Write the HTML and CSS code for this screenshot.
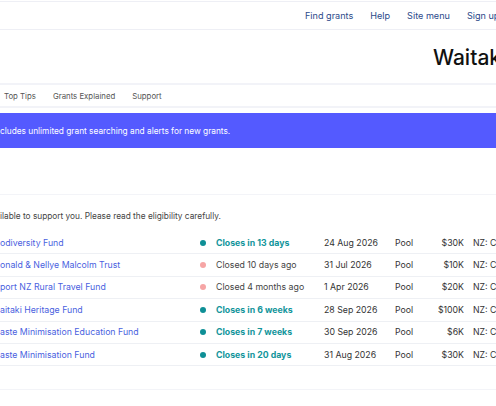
FILE: index.html
```html
<!DOCTYPE html>
<html>
<head>
<meta charset="utf-8">
<link rel="stylesheet" href="styles.css">
</head>
<body>
<div class="page">
  <header class="topbar">
    <nav class="topnav">
      <a>Find grants</a>
      <a>Help</a>
      <a>Site menu</a>
      <a>Sign up</a>
    </nav>
  </header>
  <div class="titlebar">
    <h1 class="title">Waitaki</h1>
  </div>
  <nav class="subnav">
    <a>Top Tips</a>
    <a>Grants Explained</a>
    <a>Support</a>
  </nav>
  <div class="banner">cludes unlimited grant searching and alerts for new grants.</div>
  <div class="section">
    <p class="intro">ilable to support you. Please read the eligibility carefully.</p>
    <div class="table">
      <div class="row">
        <a class="name">odiversity Fund</a>
        <span class="status open"><i class="dot"></i>Closes in 13 days</span>
        <span class="date">24 Aug 2026</span>
        <span class="type">Pool</span>
        <span class="amount">$30K</span>
        <span class="region">NZ: Canterbury</span>
      </div>
      <div class="row">
        <a class="name">onald &amp; Nellye Malcolm Trust</a>
        <span class="status closed"><i class="dot"></i>Closed 10 days ago</span>
        <span class="date">31 Jul 2026</span>
        <span class="type">Pool</span>
        <span class="amount">$10K</span>
        <span class="region">NZ: Canterbury</span>
      </div>
      <div class="row">
        <a class="name">port NZ Rural Travel Fund</a>
        <span class="status closed"><i class="dot"></i>Closed 4 months ago</span>
        <span class="date">1 Apr 2026</span>
        <span class="type">Pool</span>
        <span class="amount">$20K</span>
        <span class="region">NZ: Canterbury</span>
      </div>
      <div class="row">
        <a class="name">aitaki Heritage Fund</a>
        <span class="status open"><i class="dot"></i>Closes in 6 weeks</span>
        <span class="date">28 Sep 2026</span>
        <span class="type">Pool</span>
        <span class="amount">$100K</span>
        <span class="region">NZ: Canterbury</span>
      </div>
      <div class="row">
        <a class="name">aste Minimisation Education Fund</a>
        <span class="status open"><i class="dot"></i>Closes in 7 weeks</span>
        <span class="date">30 Sep 2026</span>
        <span class="type">Pool</span>
        <span class="amount">$6K</span>
        <span class="region">NZ: Canterbury</span>
      </div>
      <div class="row">
        <a class="name">aste Minimisation Fund</a>
        <span class="status open"><i class="dot"></i>Closes in 20 days</span>
        <span class="date">31 Aug 2026</span>
        <span class="type">Pool</span>
        <span class="amount">$30K</span>
        <span class="region">NZ: Canterbury</span>
      </div>
    </div>
  </div>
</div>
</body>
</html>
```

FILE: styles.css
```css
html, body {
  margin: 0;
  padding: 0;
  background: #fff;
}
body {
  width: 496px;
  height: 406px;
  overflow: hidden;
  font-family: Inter, "Noto Sans", sans-serif;
  font-size: 8.75px;
  color: #333;
}
.page {
  width: 496px;
  white-space: nowrap;
}
a { text-decoration: none; }

.topbar {
  border-top: 1px solid #eeeff5;
  margin-top: 1px;
  border-bottom: 1px solid #eeeff5;
  height: 27px;
  display: flex;
  align-items: center;
  overflow: hidden;
}
.topnav {
  display: flex;
  gap: 17px;
  margin-left: 305px;
  font-size: 9.1px;
}
.topnav a { color: #2c4a8a; }

.titlebar {
  height: 53px;
  border-bottom: 2px solid #f2f3f8;
  display: flex;
  align-items: center;
  overflow: hidden;
}
.title {
  margin: 0 0 0 433px;
  font-size: 21px;
  font-weight: 500;
  color: #111;
  padding-top: 2px;
}

.subnav {
  height: 21px;
  border-bottom: 2px solid #f2f3f8;
  display: flex;
  align-items: center;
  gap: 17px;
  padding-left: 4px;
  font-size: 7.8px;
}
.subnav a { color: #555; }

.banner {
  margin-top: 5px;
  height: 35px;
  background: #545aff;
  color: #fff;
  display: flex;
  align-items: center;
  font-size: 8.3px;
  overflow: hidden;
}

.section {
  margin-top: 46px;
  border-top: 1px solid #f3f4f8;
}
.intro {
  margin: 14px 0 0;
  height: 14px;
  line-height: 14px;
  color: #444;
  font-size: 8.3px;
}
.table {
  margin-top: 9px;
  border-bottom: 1px solid #f3f4f8;
  padding-bottom: 23px;
}
.row {
  height: 21.4px;
  border-bottom: 1px solid #eef0f4;
  display: grid;
  grid-template-columns: 198px 126px 71px 40px 29px 1fr;
  align-items: center;
  overflow: hidden;
}
.name { color: #4a5fe0; }
.status {
  display: flex;
  align-items: center;
  gap: 10px;
  padding-left: 2px;
}
.dot {
  width: 6px;
  height: 6px;
  border-radius: 50%;
  display: inline-block;
}
.status.open { color: #12959b; font-weight: 700; }
.status.open .dot { background: #0e8f96; }
.status.closed { color: #444; }
.status.closed .dot { background: #f6a5a5; }
.date, .type { color: #333; }
.amount { text-align: right; color: #333; }
.region { color: #333; padding-left: 9px; overflow: hidden; }
```
